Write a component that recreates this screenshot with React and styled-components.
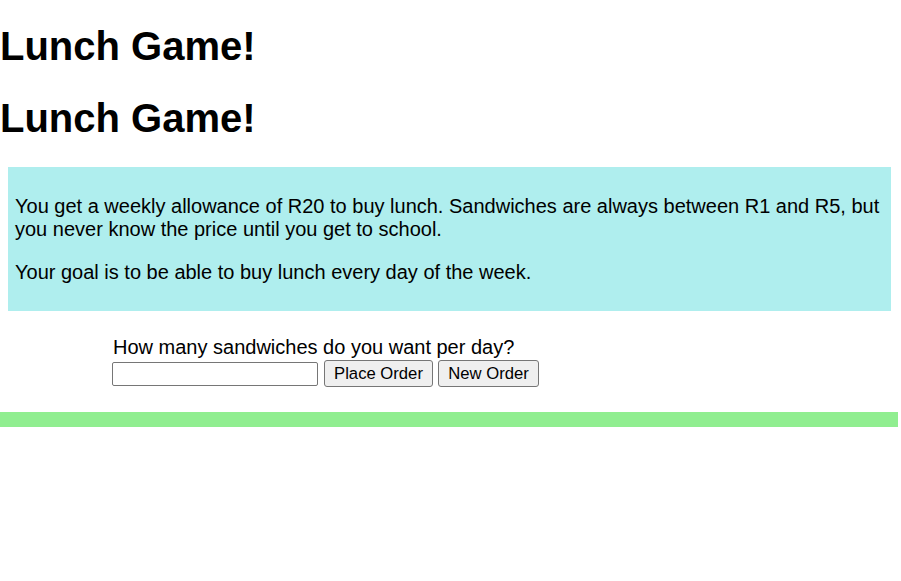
import React from "react";
import styled, { createGlobalStyle } from "styled-components";

const Global = createGlobalStyle`
  html, body { margin: 0; padding: 0; background: #fff; }
  body { font-family: "Liberation Sans", Arial, sans-serif; color: #000; }
`;

const Page = styled.div`
  display: flex;
  flex-direction: column;
  padding-top: 23px;
`;

const Title = styled.h1`
  font-size: 40px;
  font-weight: bold;
  line-height: 46px;
  margin: 0 0 26px 0;
`;

const InfoBox = styled.section`
  background: #afeeee;
  margin: 0 10px 0 8px;
  padding: 8px 7px 7px;
  font-size: 20px;
  line-height: 23px;
`;

const Para = styled.p`
  margin: 20px 0;
`;

const OrderForm = styled.form`
  display: flex;
  flex-direction: column;
  margin: 25px 0 0 112px;
  font-size: 20px;
  line-height: 23px;
`;

const Label = styled.label`
  padding-left: 1px;
`;

const Row = styled.div`
  display: flex;
  align-items: center;
  margin-top: 1px;
`;

const NumberInput = styled.input`
  box-sizing: border-box;
  width: 206px;
  height: 24px;
  margin: 1px 6px 0 0;
  border: 1px solid #767676;
  border-radius: 2px;
  padding: 1px 3px;
  font: 16.67px "Liberation Sans", Arial, sans-serif;
`;

const Button = styled.button`
  box-sizing: border-box;
  width: ${(p) => p.$w}px;
  height: 27px;
  margin-right: ${(p) => p.$mr || 0}px;
  padding: 0;
  background: #efefef;
  border: 1px solid #767676;
  border-radius: 3px;
  font: 16.67px "Liberation Sans", Arial, sans-serif;
  color: #000;
`;

const Bar = styled.div`
  height: 15px;
  width: 898px;
  background: #90ee90;
  margin-top: 25px;
`;

export default function App() {
  return (
    <>
      <Global />
      <Page>
        <Title>Lunch Game!</Title>
        <Title>Lunch Game!</Title>
        <InfoBox>
          <Para>
            You get a weekly allowance of R20 to buy lunch. Sandwiches are always between R1 and R5, but
            you never know the price until you get to school.
          </Para>
          <Para>Your goal is to be able to buy lunch every day of the week.</Para>
        </InfoBox>
        <OrderForm onSubmit={(e) => e.preventDefault()}>
          <Label htmlFor="qty">How many sandwiches do you want per day?</Label>
          <Row>
            <NumberInput id="qty" type="text" />
            <Button type="button" $w={109} $mr={5}>Place Order</Button>
            <Button type="button" $w={101}>New Order</Button>
          </Row>
        </OrderForm>
        <Bar />
      </Page>
    </>
  );
}
